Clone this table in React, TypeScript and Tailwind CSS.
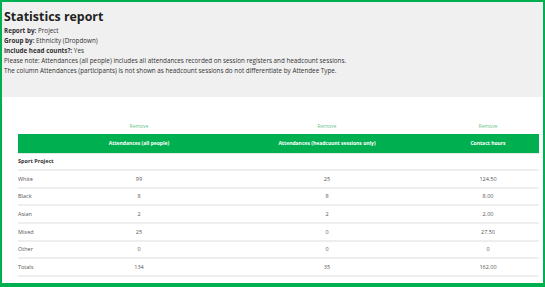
import React from 'react'

const rows = [
  { label: 'White', all: '99', head: '25', hours: '124.50' },
  { label: 'Black', all: '8', head: '8', hours: '8.00' },
  { label: 'Asian', all: '2', head: '2', hours: '2.00' },
  { label: 'Mixed', all: '25', head: '0', hours: '27.50' },
  { label: 'Other', all: '0', head: '0', hours: '0' },
  { label: 'Totals', all: '134', head: '35', hours: '162.00' },
]

const cols = 'grid grid-cols-[45px_152px_224px_98px]'

export default function App() {
  return (
    <div
      className="w-[545px] h-[287px] overflow-hidden border-2 border-b-[4px] border-[#00b050] bg-white text-[#333]"
      style={{ fontFamily: '"Open Sans", sans-serif' }}
    >
      {/* report summary */}
      <div className="bg-[#f0f0f0] h-[95px] px-[2px] pt-[7px]">
        <h1 className="text-[12.4px] leading-[16px] font-bold text-[#222]">Statistics report</h1>
        <div className="text-[6.3px] leading-[10px] mt-[1px]">
          <p><span className="font-bold">Report by:</span> Project</p>
          <p><span className="font-bold">Group by:</span> Ethnicity (Dropdown)</p>
          <p><span className="font-bold">Include head counts?:</span> Yes</p>
          <p>Please note: Attendances (all people) includes all attendances recorded on session registers and headcount sessions.</p>
          <p>The column Attendances (participants) is not shown as headcount sessions do not differentiate by Attendee Type.</p>
        </div>
      </div>

      <div className="pl-[16px] pr-[4px] pt-[23px]">
        <div className={`${cols} h-[14px] items-center text-[5px] text-[#6cbf8c]`}>
          <div />
          <div className="text-center">Remove</div>
          <div className="text-center">Remove</div>
          <div className="text-center">Remove</div>
        </div>
        <div className={`${cols} h-[20px] items-center bg-[#00b050] text-white font-bold text-[5px] border-b border-[#dfe7e2]`}>
          <div />
          <div className="text-center">Attendances (all people)</div>
          <div className="text-center">Attendances (headcount sessions only)</div>
          <div className="text-center">Contact hours</div>
        </div>
        <div className="h-[17px] flex items-center text-[5.5px] font-bold border-b-2 border-[#eeeeee]">
          Sport Project
        </div>
        {rows.map((r) => (
          <div
            key={r.label}
            className={`${cols} h-[17.7px] items-center text-[5.5px] text-[#555] border-b-2 border-[#eeeeee]`}
          >
            <div>{r.label}</div>
            <div className="text-center">{r.all}</div>
            <div className="text-center">{r.head}</div>
            <div className="text-center">{r.hours}</div>
          </div>
        ))}
      </div>
    </div>
  )
}
